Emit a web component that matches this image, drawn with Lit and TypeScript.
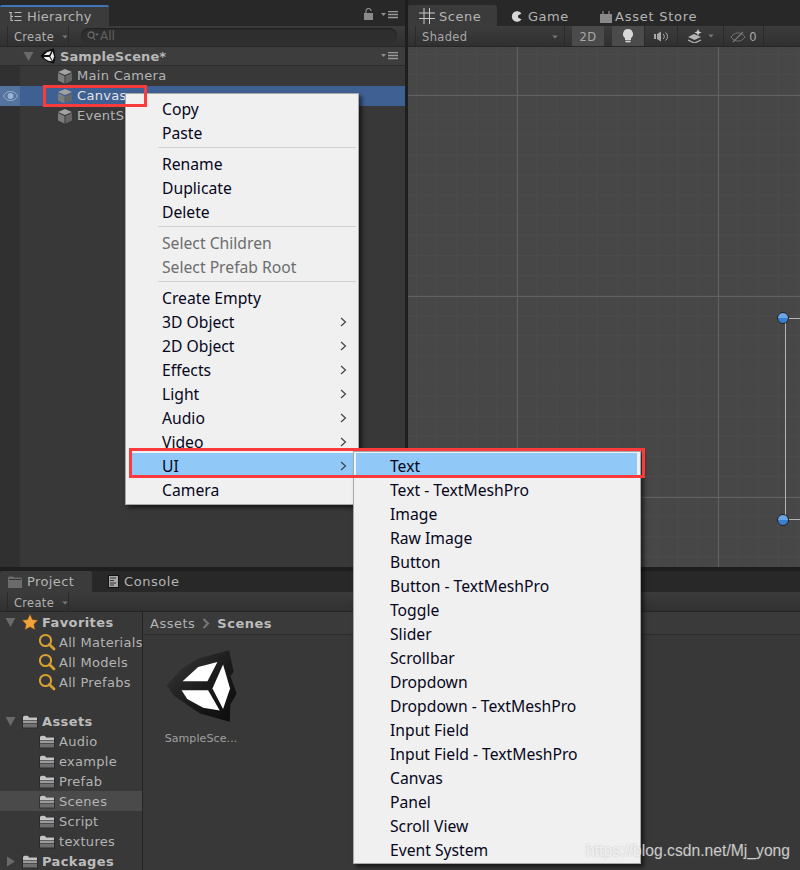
import { LitElement, html, css, svg } from "lit";
import { customElement } from "lit/decorators.js";

const cube = html`<svg class="cube" viewBox="0 0 16 16"><path d="M8 1 15 4 8 7 1 4Z" fill="#a2a2a2"/><path d="M1 5 7.5 8V15.5L1 12.5Z" fill="#7c7c7c"/><path d="M15 5 8.5 8V15.5L15 12.5Z" fill="#666"/></svg>`;
const folderIcon = html`<svg class="folder" viewBox="0 0 18 18"><path d="M1 5.500 2 3H7L8.500 5H16.500L17 7V16.500H1Z" fill="#1f1f1f" opacity=".55"/><path d="M2 5 3 3.700H7L8 5.500H16V8H2Z" fill="#c4c4c4"/><path d="M2 8.500H16V11H2Z" fill="#9a9a9a"/><path d="M2 11.500H16V15.500H2Z" fill="#6f6f6f"/></svg>`;
const menuLines = html`<svg class="menulines" viewBox="0 0 18 8"><path d="M0 2H5L2.500 5Z" fill="#8f8f8f"/><path d="M7 0.500H17M7 3.500H17M7 6.500H17" stroke="#9a9a9a" stroke-width="1.6"/></svg>`;
const caret = html`<svg class="caret" viewBox="0 0 7 5"><path d="M0 .5H7L3.500 4.500Z" fill="#777"/></svg>`;
const chev = html`<svg class="chev" viewBox="0 0 7 10"><path d="M1 1 5.500 5 1 9" fill="none" stroke="#444" stroke-width="1.2"/></svg>`;
const triDown = html`<svg class="tri" viewBox="0 0 11 11"><path d="M.5 1H10.500L5.500 10Z" fill="#6a6a6a"/></svg>`;
const triRight = html`<svg class="tri" viewBox="0 0 11 11"><path d="M2 .5 10 5.500 2 10.500Z" fill="#6a6a6a"/></svg>`;
const loupe = html`<svg class="loupe" viewBox="0 0 18 18"><circle cx="7.500" cy="7.500" r="5.600" fill="none" stroke="#d9a032" stroke-width="2"/><path d="M11.500 11.500 16 16" stroke="#d9a032" stroke-width="2.800" stroke-linecap="round"/></svg>`;

const unityShards = svg`
  <defs><linearGradient id="ug" x1="0" y1="0" x2="1" y2="1"><stop offset="0" stop-color="#3a3a3a"/><stop offset=".55" stop-color="#1a1a1a"/><stop offset="1" stop-color="#0c0c0c"/></linearGradient></defs>
  <path d="M80 140 128 88 175 60 268 35 282 100 272 112 291 165 272 198 270 250 180 225 100 170Z" fill="url(#ug)"/>
  <path d="M128 128 175 85 233 70 203 128Z" fill="#fff"/>
  <path d="M125 155H205L240 216 190 208 142 182Z" fill="#fff"/>
  <path d="M250 78 271 150 250 212 218 150Z" fill="#fff"/>`;

const subItems = ["Text - TextMeshPro","Image","Raw Image","Button","Button - TextMeshPro","Toggle","Slider","Scrollbar","Dropdown","Dropdown - TextMeshPro","Input Field","Input Field - TextMeshPro","Canvas","Panel","Scroll View","Event System"];
const submenuParents = ["3D Object","2D Object","Effects","Light","Audio","Video"];

@customElement("app-root")
export class AppRoot extends LitElement {
  static styles = css`
    :host { display: block; width: 800px; height: 870px; position: relative; overflow: hidden; background: #1e1e1e; font-family: "DejaVu Sans", sans-serif; font-size: 13px; color: #b4b4b4; }
    svg { display: block; flex: none; }
    .layout { display: grid; grid-template-rows: 567px 299px; row-gap: 4px; height: 870px; }
    .top { display: grid; grid-template-columns: 405px 392px; column-gap: 3px; min-height: 0; }
    .panel { display: flex; flex-direction: column; min-height: 0; background: #383838; }
    .tabbar { height: 26px; flex: none; background: #282828; display: flex; align-items: flex-end; box-sizing: border-box; }
    .tab { height: 21px; display: flex; align-items: center; gap: 4px; box-sizing: border-box; }
    .tab.active { background: #3b3b3b; border-radius: 2px 2px 0 0; }
    .tab.hi { height: 21px; width: 109px; padding-left: 8px; border-top: 2px solid #3f74b8; gap: 5px; letter-spacing: .2px; }
    .spring { flex: 1; }
    .lock { margin: 0 8px 6px 0; }
    .tabmenu { margin-bottom: 7px; }
    .tools { height: 21px; flex: none; display: flex; align-items: center; background: linear-gradient(#3c3c3c, #303030); border-bottom: 1px solid #262626; box-sizing: border-box; }
    .tools.short { height: 20px; }
    .create { height: 20px; display: flex; align-items: center; gap: 8px; font-size: 11.5px; color: #b0b0b0; padding: 2px 5px 0 6px; margin-left: 7px; border-left: 1px solid #2a2a2a; border-right: 1px solid #2a2a2a; width: 62px; box-sizing: border-box; letter-spacing: .3px; }
    .caret { width: 6px; height: 4px; }
    .search { flex: 1; height: 16px; margin: 0 8px 0 12px; border-radius: 8px; background: #2e2e2e; display: flex; align-items: center; gap: 1px; padding-left: 6px; color: #606060; font-size: 12px; box-shadow: inset 0 1px 1px #222; }
    .hbody { flex: 1; background: linear-gradient(90deg, #303030 20px, #383838 20px); }
    .scenehead { height: 18px; display: flex; align-items: center; background: #3d3d3d; padding-left: 23px; border-bottom: 1px solid #2c2c2c; font-weight: 700; color: #b8b8b8; font-size: 13px; letter-spacing: .1px; }
    .scenehead .tri { margin-right: 6px; }
    .scenehead b { margin-left: 4px; font-weight: 700; }
    .tri { width: 11px; height: 11px; }
    .menulines { width: 18px; height: 8px; margin-right: 6px; }
    .hrow { height: 20px; display: flex; align-items: center; padding-left: 57px; gap: 4px; letter-spacing: .3px; }
    .hrow span { position: relative; top: -1px; }
    .hrow.sel { background: #3e6093; color: #e4e4e4; position: relative; }
    .cube { width: 16px; height: 16px; }
    .eye { position: absolute; left: 0; top: 0; width: 20px; height: 20px; background: #54749e; display: flex; align-items: center; justify-content: center; }
    .scene-tabs { gap: 0; }
    .tab.stab { width: 89px; padding: 1px 0 0 11px; gap: 4px; letter-spacing: .5px; }
    .tab.gtab { width: 101px; padding: 1px 0 0 14px; gap: 6px; letter-spacing: .5px; }
    .tab.atab { padding: 1px 0 0 2px; gap: 3px; letter-spacing: .75px; }
    .st { height: 20px; display: flex; align-items: center; justify-content: center; box-sizing: border-box; border-right: 1px solid #2a2a2a; font-size: 11.5px; color: #a8a8a8; }
    .st.shaded { width: 150px; margin-left: 7px; padding: 2px 6px 0; justify-content: space-between; border-left: 1px solid #2a2a2a; letter-spacing: .35px; }
    .st.twod { width: 32px; margin-left: 7px; background: #4b4b4b; border: 0; padding-top: 2px; letter-spacing: .3px; }
    .st.light { width: 33px; margin-left: 8px; background: #4b4b4b; }
    .st.audio { width: 33px; }
    .st.fx { width: 46px; gap: 6px; }
    .st.vis { width: 40px; gap: 3px; padding-top: 1px; }
    .canvas { flex: 1; position: relative; background-color: #474747;
      background-image:
        linear-gradient(90deg, #626262 1px, transparent 1px),
        linear-gradient(#626262 1px, transparent 1px),
        linear-gradient(90deg, #4b4b4b 1px, transparent 1px),
        linear-gradient(#4b4b4b 1px, transparent 1px);
      background-size: 201px 100%, 100% 201px, 20.1px 100%, 100% 20.1px;
      background-position: 109px 0, 0 48px, 8px 0, 0 7px;
    }
    .gv { position: absolute; left: 377px; top: 271px; width: 1px; height: 202px; background: #b5b5b5; }
    .gh { position: absolute; left: 377px; width: 16px; height: 1px; background: #b5b5b5; }
    .gh.a { top: 271px; } .gh.b { top: 472px; }
    .handle { position: absolute; left: 369px; width: 12px; height: 12px; box-sizing: border-box; border-radius: 50%; background: linear-gradient(#6aa5e6 50%, #3a7fcf 50%); border: 1px solid #222; }
    .handle.a { top: 265px; } .handle.b { top: 467px; }

    .bottom { display: flex; flex-direction: column; background: #383838; min-height: 0; }
    .ptabs { height: 21px; flex: none; background: #282828; display: flex; }
    .tab.ptab { width: 92px; padding-left: 8px; gap: 5px; letter-spacing: .4px; }
    .tab.ctab { padding-left: 16px; gap: 5px; letter-spacing: .55px; }
    .pbody { flex: 1; display: grid; grid-template-columns: 143px 1fr; min-height: 0; }
    .side { border-right: 1px solid #232323; overflow: hidden; }
    .trow { height: 20px; display: flex; align-items: center; letter-spacing: .3px; white-space: nowrap; }
    .trow.root { padding-left: 5px; font-weight: 700; color: #bcbcbc; gap: 3px; font-size: 13px; letter-spacing: .4px; }
    .trow.root .tri { margin-right: 2px; }
    .trow.leaf { padding-left: 38px; gap: 3px; }
    .trow.selrow { background: #4a4a4a; }
    .trow.assets { margin-top: 19px; }
    .loupe, .folder { width: 18px; height: 18px; }
    .main { display: flex; flex-direction: column; min-width: 0; }
    .crumbs { height: 22px; flex: none; display: flex; align-items: center; padding-left: 7px; gap: 7px; background: #3a3a3a; border-bottom: 1px solid #2d2d2d; letter-spacing: .5px; }
    .crumbs b { color: #bcbcbc; }
    .asset { width: 92px; margin: 12px 0 0 12px; display: flex; flex-direction: column; align-items: center; gap: 7px; font-size: 11px; letter-spacing: .1px; color: #a0a0a0; }
    .logo { filter: blur(.4px); }

    .menu { position: absolute; background: #f0f0f0; border: 1px solid #a8a8a8; box-shadow: 3px 3px 4px rgba(0,0,0,.55); box-sizing: border-box; font-family: "Noto Sans", "Noto Sans CJK SC", sans-serif; font-size: 15.7px; color: #07071c; }
    .menu.main-menu { left: 125px; top: 93px; width: 234px; padding: 2px 0 0; height: 412px; }
    .menu.sub { left: 353px; top: 451px; width: 288px; height: 413px; padding: 1px 0; z-index: 1; }
    .mi { height: 24px; display: flex; align-items: center; justify-content: space-between; padding: 2px 11px 0 36px; box-sizing: border-box; line-height: 22px; }
    .mi.off { color: #6d6d6d; }
    .mi.hl { background: #90c8f7; margin-left: 4px; padding-left: 32px; }
    .sub .mi.hl { margin: 0 3px 0 2px; padding-left: 34px; }
    .sep { height: 1px; background: #d0d0d0; margin: 3px 2px 3px 32px; }
    .chev { width: 7px; height: 10px; }
    .red { position: absolute; border: 3px solid #fb3a3e; box-sizing: border-box; z-index: 2; }
    .red.a { left: 43px; top: 85px; width: 104px; height: 22px; }
    .red.b { left: 129px; top: 448px; width: 516px; height: 30px; }
    .mark { position: absolute; left: 586px; top: 842px; z-index: 3; font-family: "Liberation Sans", Arial, sans-serif; font-size: 15.7px; color: rgba(255,255,255,.72); text-shadow: 0 0 2px rgba(120,120,120,.45); white-space: nowrap; }
  `;

  render() {
    return html`
      <div class="layout">
        <div class="top">
          <section class="panel">
            <div class="tabbar">
              <div class="tab active hi">
                <svg width="14" height="12" viewBox="0 0 14 12"><path d="M1 1.500H4M3 1.500V9.500H5M3 5.500H5M6.500 1.500H13.500M6.500 5.500H13.500M6.500 9.500H13.500" stroke="#b8b8b8" fill="none" stroke-width="1.2"/></svg>
                <span>Hierarchy</span>
              </div>
              <div class="spring"></div>
              <svg class="lock" width="9" height="12" viewBox="0 0 9 12"><path d="M2 5V3a2.500 2.500 0 0 1 5 0" fill="none" stroke="#8a8a8a" stroke-width="1.2"/><rect y="5" width="9" height="7" fill="#8a8a8a"/></svg>
              <div class="tabmenu">${menuLines}</div>
            </div>
            <div class="tools">
              <div class="create">Create ${caret}</div>
              <div class="search">
                <svg width="12" height="10" viewBox="0 0 12 10"><circle cx="4" cy="4" r="3" fill="none" stroke="#666" stroke-width="1.3"/><path d="M6 6 8 9" stroke="#666" stroke-width="1.3"/><path d="M8 2.500H12L10 5Z" fill="#666"/></svg>
                <span>All</span>
              </div>
            </div>
            <div class="hbody">
              <div class="scenehead">
                ${triDown}
                <svg width="16" height="16" viewBox="75 30 220 225"><path d="M80 140 128 88 175 60 268 35 290 165 270 250 180 225 100 170Z" fill="#111"/><path d="M128 128 175 85 233 72 203 128Z" fill="#eee"/><path d="M125 155H205L240 215 190 208 142 182Z" fill="#eee"/><path d="M250 80 271 150 250 211 218 150Z" fill="#eee"/></svg>
                <b>SampleScene*</b>
                <div class="spring"></div>
                ${menuLines}
              </div>
              <div class="hrow">${cube}<span>Main Camera</span></div>
              <div class="hrow sel">
                <div class="eye"><svg width="15" height="10" viewBox="0 0 15 10"><path d="M.5 5C3 1 5 .5 7.500 .5S12 1 14.500 5C12 9 10 9.500 7.500 9.500S3 9 .5 5Z" fill="none" stroke="#9db4d1"/><circle cx="7.500" cy="5" r="3" fill="#9db4d1"/></svg></div>
                ${cube}<span>Canvas</span>
              </div>
              <div class="hrow">${cube}<span>EventSystem</span></div>
            </div>
          </section>
          <section class="panel">
            <div class="tabbar scene-tabs">
              <div class="tab active stab">
                <svg width="16" height="16" viewBox="0 0 16 16"><path d="M0 5H16M0 10.500H16M5 0V16M10.500 0V16" stroke="#c8c8c8"/></svg><span>Scene</span>
              </div>
              <div class="tab gtab">
                <svg width="11" height="11" viewBox="0 0 11 11"><path d="M10.500 2.500A5.300 5.300 0 1 0 10.500 8.500L7 6.500V4.500Z" fill="#d6d6d6"/></svg><span>Game</span>
              </div>
              <div class="tab atab">
                <svg width="12" height="13" viewBox="0 0 12 13"><rect y="4" width="12" height="9" fill="#8a8a8a"/><rect x="1" y="1" width="10" height="3" fill="#222"/><path d="M3 4V1M9 4V1" stroke="#aaa"/></svg><span>Asset Store</span>
              </div>
            </div>
            <div class="tools">
              <div class="st shaded"><span>Shaded</span>${caret}</div>
              <div class="st twod">2D</div>
              <div class="st light"><svg width="12" height="16" viewBox="0 0 12 16"><path d="M6 1a5 5 0 0 1 3 9V12H3V10A5 5 0 0 1 6 1Z" fill="#d8d8d8"/><path d="M3.500 13.500H8.500" stroke="#d8d8d8" stroke-width="1.6"/></svg></div>
              <div class="st audio"><svg width="15" height="11" viewBox="0 0 15 11"><path d="M0 3H2V8H0ZM3 3 7 .5V10.500L3 8Z" fill="#a8a8a8"/><path d="M9 3a3 3 0 0 1 0 5M11.500 1.500a5 5 0 0 1 0 8" fill="none" stroke="#a8a8a8"/></svg></div>
              <div class="st fx"><svg width="14" height="14" viewBox="0 0 14 14"><path d="M0 8 6 5 13 8 6.500 11Z" fill="#b4b4b4"/><path d="M0 11 6.500 14 13 11" fill="none" stroke="#b4b4b4" stroke-width="1.3"/><path d="M10 0 11 2.600 13.600 3.500 11 4.500 10 7 9 4.500 6.400 3.500 9 2.600Z" fill="#d0d0d0"/></svg>${caret}</div>
              <div class="st vis"><svg width="16" height="12" viewBox="0 0 16 12"><path d="M1 6C3.500 2.500 6 2 8 2S12.500 2.500 15 6C12.500 9.500 10 10 8 10S3.500 9.500 1 6Z" fill="none" stroke="#777"/><path d="M3 11 13 1" stroke="#777" stroke-width="1.3"/></svg><span>0</span></div>
            </div>
            <div class="canvas">
              <div class="gv"></div><div class="gh a"></div><div class="gh b"></div>
              <div class="handle a"></div><div class="handle b"></div>
            </div>
          </section>
        </div>
        <section class="bottom">
          <div class="ptabs">
            <div class="tab active ptab">
              <svg width="14" height="12" viewBox="0 0 14 12"><path d="M0 1.500 1 .5H5L6 1.500H13L14 3V12H0Z" fill="#6b6b6b"/><path d="M1 3H13V4H1Z" fill="#333"/></svg><span>Project</span>
            </div>
            <div class="tab ctab">
              <svg width="11" height="13" viewBox="0 0 11 13"><rect width="11" height="13" fill="#111"/><rect x="1" y="1" width="9" height="11" fill="#a8a8a8"/><path d="M2 3H8M2 5.500H6M2 8H8M2 10H6" stroke="#333"/></svg><span>Console</span>
            </div>
          </div>
          <div class="tools short"><div class="create">Create ${caret}</div></div>
          <div class="pbody">
            <div class="side">
              <div class="trow root">${triDown}<svg width="18" height="18" viewBox="0 0 18 18"><path d="M9 1 11.500 6.500 17 7.200 13 11.200 14.200 17 9 14 3.800 17 5 11.200 1 7.200 6.500 6.500Z" fill="#f0a33a" stroke="#5e3e12" stroke-width=".6"/></svg><span>Favorites</span></div>
              ${["All Materials","All Models","All Prefabs"].map(t => html`<div class="trow leaf">${loupe}<span>${t}</span></div>`)}
              <div class="trow root assets">${triDown}${folderIcon}<span>Assets</span></div>
              ${["Audio","example","Prefab","Scenes","Script","textures"].map(t => html`<div class="trow leaf ${t === "Scenes" ? "selrow" : ""}">${folderIcon}<span>${t}</span></div>`)}
              <div class="trow root">${triRight}${folderIcon}<span>Packages</span></div>
            </div>
            <div class="main">
              <div class="crumbs"><span>Assets</span><svg width="8" height="11" viewBox="0 0 8 11"><path d="M1.500 1 6 5.500 1.500 10" fill="none" stroke="#777" stroke-width="2"/></svg><b>Scenes</b></div>
              <div class="asset">
                <svg class="logo" width="77" height="78" viewBox="70 25 230 235">${unityShards}</svg>
                <span>SampleSce...</span>
              </div>
            </div>
          </div>
        </section>
      </div>

      <div class="menu main-menu">
        <div class="mi">Copy</div><div class="mi">Paste</div>
        <div class="sep"></div>
        <div class="mi">Rename</div><div class="mi">Duplicate</div><div class="mi">Delete</div>
        <div class="sep"></div>
        <div class="mi off">Select Children</div><div class="mi off">Select Prefab Root</div>
        <div class="sep"></div>
        <div class="mi">Create Empty</div>
        ${submenuParents.map(t => html`<div class="mi"><span>${t}</span>${chev}</div>`)}
        <div class="mi hl"><span>UI</span>${chev}</div>
        <div class="mi">Camera</div>
      </div>
      <div class="menu sub">
        <div class="mi hl">Text</div>
        ${subItems.map(t => html`<div class="mi">${t}</div>`)}
      </div>
      <div class="red a"></div>
      <div class="red b"></div>
      <div class="mark">https://blog.csdn.net/Mj_yong</div>
    `;
  }
}
